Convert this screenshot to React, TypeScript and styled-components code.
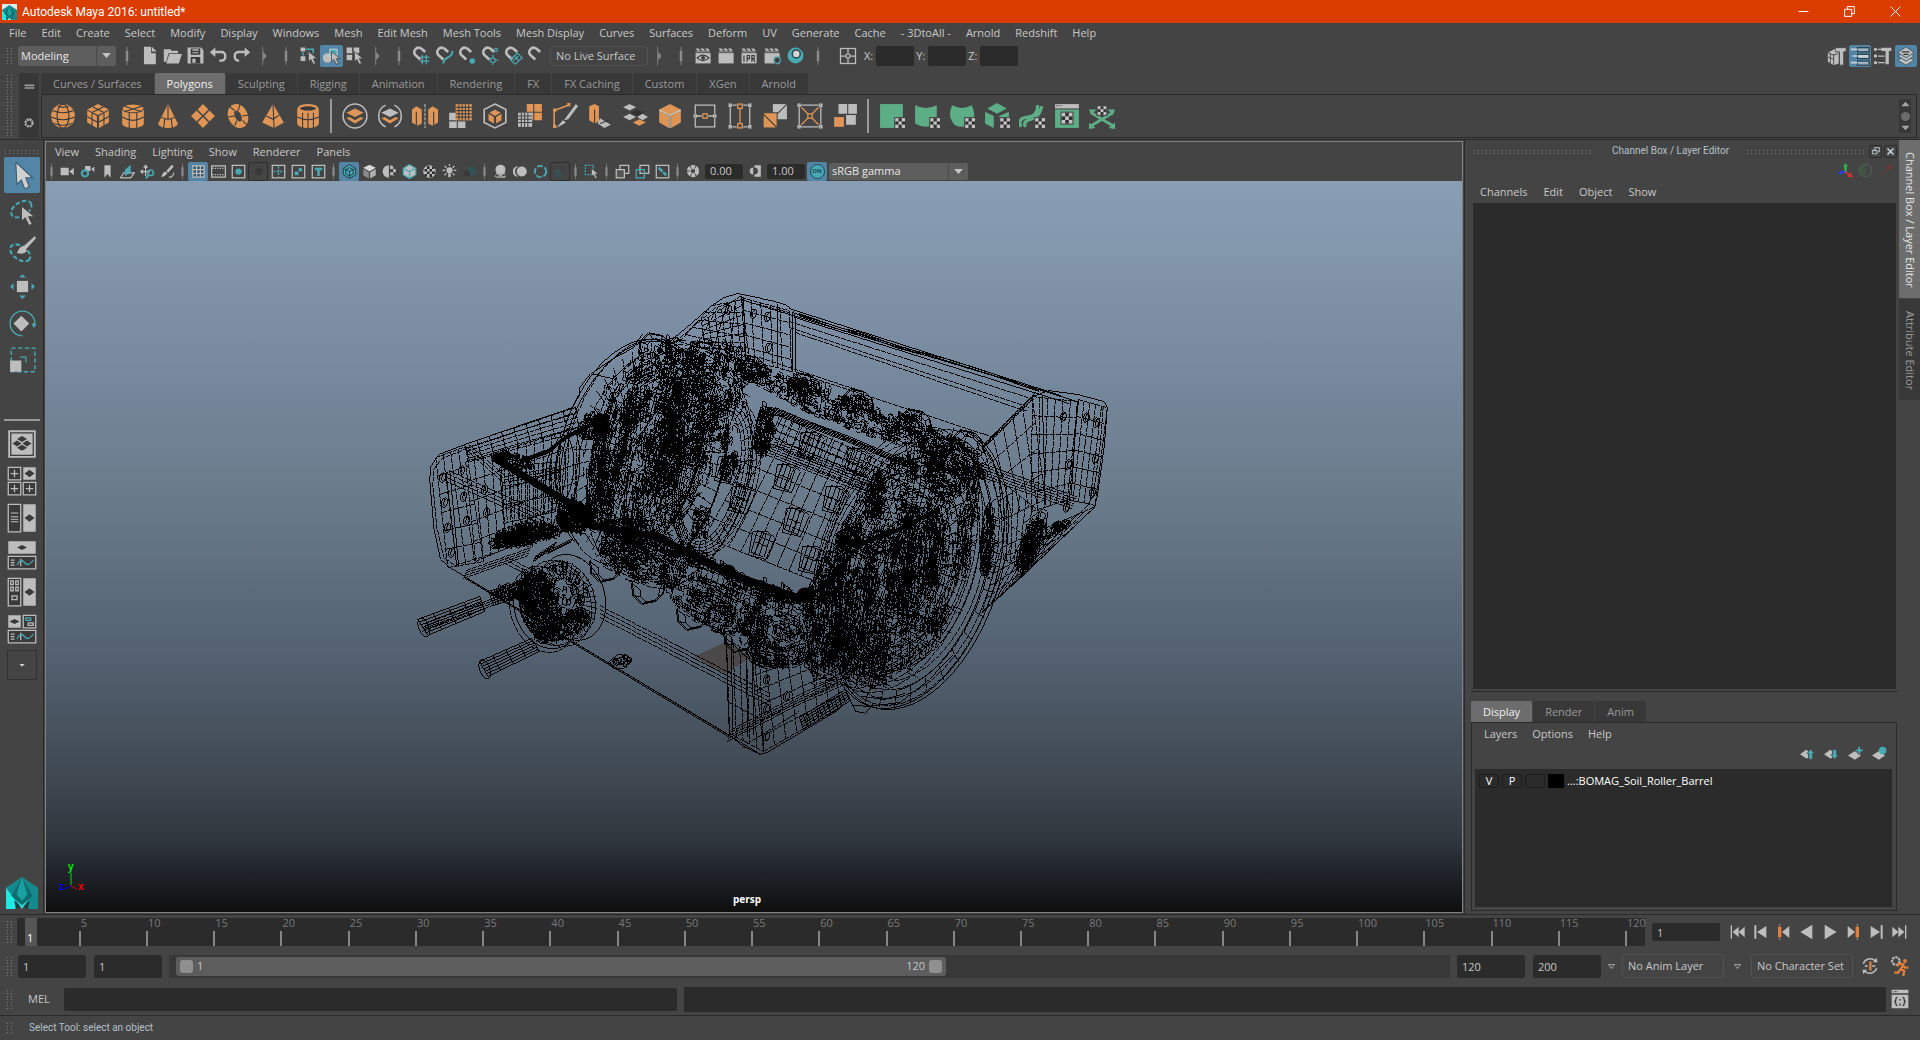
import React from "react";
import styled, { createGlobalStyle } from "styled-components";

/* ---------- palette ---------- */
const C = {
  bg: "#444444",
  dark: "#2b2b2b",
  line: "#2a2a2a",
  tab: "#383838",
  tabOn: "#6d6d6d",
  text: "#c8c8c8",
  dim: "#9a9a9a",
  blue: "#5285a6",
  icon: "#bdbdbd",
  teal: "#48aab5",
  orange: "#de9556",
  green: "#5dad87",
};

const Global = createGlobalStyle`
  * { box-sizing: border-box; }
  html, body { margin: 0; background: ${C.bg}; }
  body, button, input, select {
    font-family: "Open Sans", "Noto Sans", sans-serif;
    font-size: 11px;
    line-height: 16px;
    color: ${C.text};
  }
  button, input, select { margin: 0; padding: 0; border: 0; background: none; border-radius: 0; outline: none; }
  button { cursor: pointer; }
`;

/* ---------- deterministic random numbers for the mesh ---------- */
const makeRandom = (seed: number) => () => {
  seed = (seed * 1664525 + 1013904223) % 4294967296;
  return seed / 4294967296;
};

type P = [number, number];
const seg = (a: P, b: P) => `M${a[0].toFixed(1)} ${a[1].toFixed(1)}L${b[0].toFixed(1)} ${b[1].toFixed(1)}`;
const lerp = (a: P, b: P, t: number): P => [a[0] + (b[0] - a[0]) * t, a[1] + (b[1] - a[1]) * t];
const poly = (pts: P[], closed = false) =>
  "M" + pts.map((p) => `${p[0].toFixed(1)} ${p[1].toFixed(1)}`).join("L") + (closed ? "Z" : "");

/* bilinear grid over four corners */
const grid = (a: P, b: P, c: P, d: P, nu: number, nv: number) => {
  let s = "";
  for (let i = 0; i <= nu; i++) s += seg(lerp(a, b, i / nu), lerp(d, c, i / nu));
  for (let j = 0; j <= nv; j++) s += seg(lerp(a, d, j / nv), lerp(b, c, j / nv));
  return s;
};

const onEllipse = (cx: number, cy: number, rx: number, ry: number, rot: number, t: number): P => {
  const r = (rot * Math.PI) / 180;
  const x = Math.cos(t) * rx;
  const y = Math.sin(t) * ry;
  return [cx + x * Math.cos(r) - y * Math.sin(r), cy + x * Math.sin(r) + y * Math.cos(r)];
};
const ring = (cx: number, cy: number, rx: number, ry: number, rot: number, n = 36, from = 0, to = Math.PI * 2) => {
  const pts: P[] = [];
  for (let i = 0; i <= n; i++) pts.push(onEllipse(cx, cy, rx, ry, rot, from + ((to - from) * i) / n));
  return poly(pts);
};
const spokes = (cx: number, cy: number, r1: P, r2: P, rot: number, n: number, dx = 0, dy = 0) => {
  let s = "";
  for (let i = 0; i < n; i++) {
    const t = (i / n) * Math.PI * 2;
    const q = onEllipse(cx, cy, r2[0], r2[1], rot, t);
    s += seg(onEllipse(cx, cy, r1[0], r1[1], rot, t), [q[0] + dx, q[1] + dy]);
  }
  return s;
};
/* small parts inside an ellipse: arcs that follow it, upright facets, and short edges along the axle;
   parts gather in bands and leave openings between them */
const facets = (rnd: () => number, cx: number, cy: number, rx: number, ry: number, rot: number, n: number, len: number) => {
  let s = "";
  const wide = Math.min(rx, ry) > 20;
  for (let i = 0; i < n; i++) {
    const kk = Math.sqrt(rnd());
    const a = rnd() * Math.PI * 2;
    const kind = rnd();
    const skip = rnd();
    const l = len * (0.35 + rnd() * 0.65);
    const p = onEllipse(cx, cy, rx * kk, ry * kk, rot, a);
    const band = Math.sin(kk * 17) + Math.sin(a * 7 + kk * 5) + Math.sin(p[0] * 0.21) * 0.7;
    if (wide ? skip < (band < 0 ? 0.78 : 0.3) : skip < 0.22) continue;
    if (kind < 0.42) {
      const d = l / Math.max(6, Math.max(rx, ry) * kk);
      s += ring(cx, cy, rx * kk, ry * kk, rot, 3, a, a + Math.min(d, 1.2));
    } else if (kind < 0.7) {
      const q: P = [p[0] + l * 0.1, p[1] - l * 0.75];
      const w = 2 + rnd() * 3;
      s += poly([p, q, [q[0] + w, q[1] + w * 0.5], [p[0] + w, p[1] + w * 0.5]], rnd() < 0.5);
    } else if (kind < 0.9) {
      s += seg(p, [p[0] + l * 0.6, p[1] + l * 0.26]);
    } else {
      s += seg(p, [p[0] + l * 0.5, p[1] - l * 0.3]);
    }
  }
  return s;
};
/* parallel tubes along a polyline */
const tube = (pts: P[], w: number, n: number) => {
  let s = "";
  for (let i = 0; i <= n; i++) {
    const o = -w / 2 + (w * i) / n;
    s += poly(pts.map(([x, y]) => [x - o * 0.4, y + o] as P));
  }
  return s;
};
const tooth = (x: number, y: number, f: number) => {
  const top: P[] = [[-16, 10], [-15, -2], [-6, -11], [8, -8], [15, -1], [17, 12]];
  const a = top.map(([u, v]) => [x + u, y + v * f] as P);
  const b = top.map(([u, v]) => [x + u * 0.6 + 2, y + v * 0.6 * f + 2] as P);
  return poly(a) + poly(b) + a.map((p, i) => seg(p, b[i])).join("") + poly(a.map(([u, v]) => [u + 1, v + f] as P));
};
/* lug on the drum face */
const lug = (x: number, y: number) =>
  grid([x - 4, y - 14], [x + 9, y - 9], [x + 2, y + 13], [x - 11, y + 8], 3, 2) +
  poly([[x - 9, y - 13], [x + 6, y - 13], [x + 14, y - 6], [x + 5, y + 15], [x - 13, y + 11]], true);

const buildMesh = () => {
  const rnd = makeRandom(2016);
  let thin = "";
  let mid = "";

  /* far beam */
  ([
    [[744, 301], [1050, 393], 1], [[790, 309], [1062, 396], 1], [[796, 314], [1078, 402], 1],
    [[796, 318], [1070, 404], 1], [[790, 322], [1035, 400], 0], [[790, 328], [1030, 408], 0],
    [[796, 333], [1028, 412], 0], [[797, 373], [992, 437], 0], [[760, 358], [860, 391], 0],
  ] as [P, P, number][]).forEach(([a, b, m]) => (m ? (mid += seg(a, b)) : (thin += seg(a, b))));
  mid += poly([[800, 314], [840, 328], [862, 333], [900, 347], [950, 360], [988, 372], [1040, 391]]);
  mid += poly([[800, 316], [840, 330], [862, 335], [900, 349], [950, 362], [988, 374], [1040, 392]]);

  /* far plate */
  mid += poly([[670, 342], [693, 323], [712, 306], [724, 298], [738, 294], [772, 301], [786, 305], [794, 311], [796, 320], [796, 372]]);
  thin += poly([[676, 342], [716, 308], [740, 300], [790, 313]]);
  thin += grid([680, 342], [712, 306], [744, 300], [746, 362], 5, 4);
  thin += grid([702, 322], [742, 296], [750, 362], [706, 352], 6, 7);
  thin += grid([742, 298], [790, 311], [792, 372], [746, 360], 5, 5);
  mid += seg([744, 298], [746, 360]) + seg([778, 304], [778, 368]) + seg([793, 312], [793, 372]);

  /* left box */
  mid += poly([[573, 408], [520, 426], [465, 445], [439, 455], [431, 467], [430, 480], [434, 527], [441, 560], [450, 568], [465, 577]]);
  mid += seg([446, 470], [457, 567]) + seg([450, 470], [459, 568]);
  thin += poly([[576, 414], [520, 431], [467, 449], [442, 459], [434, 470], [433, 484], [437, 527], [444, 558], [455, 566], [503, 551]]);
  thin += grid([436, 458], [466, 447], [484, 562], [448, 568], 4, 6);
  thin += grid([465, 445], [576, 408], [580, 432], [470, 462], 9, 5);
  thin += grid([466, 462], [578, 428], [574, 520], [476, 562], 13, 5);
  thin += grid([500, 468], [560, 462], [556, 512], [504, 524], 14, 3);
  thin += tube([[447, 476], [545, 520]], 10, 3) + tube([[468, 448], [505, 480], [560, 470]], 6, 2);
  thin += tube([[465, 575], [530, 552]], 8, 3);
  mid += ring(562, 470, 12, 34, 4) + ring(568, 468, 12, 40, 4) + ring(556, 474, 10, 30, 4);

  /* right box */
  mid += poly([[1033, 397], [1050, 391], [1079, 395], [1105, 402], [1108, 408], [1105, 447], [1098, 497], [1095, 508], [1025, 575], [983, 613]]);
  mid += seg([1043, 396], [1046, 505]) + seg([1078, 402], [1072, 495]);
  thin += poly([[1104, 406], [1101, 445], [1094, 496], [1088, 506], [1020, 572]]);
  thin += grid([1033, 397], [1079, 402], [1070, 500], [1032, 512], 6, 6);
  thin += grid([1079, 400], [1108, 408], [1096, 506], [1068, 500], 5, 6);
  thin += grid([984, 447], [1033, 397], [1046, 500], [1004, 520], 5, 4);
  thin += tube([[984, 447], [1034, 397]], 7, 3) + tube([[960, 463], [1075, 503]], 12, 5);
  thin += grid([1002, 548], [1096, 507], [1025, 574], [983, 612], 9, 5);
  thin += grid([1000, 480], [1040, 512], [1026, 570], [1004, 560], 6, 2);

  /* base frame and front box */
  mid += seg([463, 576], [730, 736]) + seg([466, 578], [761, 755]) + seg([464, 578], [730, 738]);
  [0, 4, 8, 12].forEach((o) => (thin += seg([600, 606 + o], [770, 694 + o])));
  thin += tube([[505, 560], [540, 578]], 6, 2);
  mid += poly([[727, 636], [728, 690], [730, 736], [745, 748], [760, 755], [768, 753], [840, 710]]);
  mid += seg([732, 640], [733, 732]) + seg([747, 660], [748, 738]) + seg([753, 658], [754, 736]);
  thin += grid([727, 640], [760, 658], [764, 752], [730, 734], 5, 3);
  thin += grid([755, 660], [830, 636], [842, 708], [764, 752], 7, 6);
  thin += tube([[730, 736], [800, 700], [850, 678]], 12, 4) + seg([742, 748], [800, 712]);
  mid += grid([800, 718], [846, 690], [850, 702], [804, 730], 12, 5);
  mid += poly([[846, 690], [856, 712], [866, 714], [874, 704]]);

  /* barrel skin */
  thin += grid([776, 408], [905, 462], [862, 600], [705, 538], 13, 7);
  thin += grid([780, 416], [890, 466], [880, 490], [770, 444], 16, 4);
  thin += tube([[772, 448], [880, 490]], 16, 7);
  [[811, 446], [858, 462], [787, 478], [742, 500], [796, 522], [762, 545], [728, 470], [836, 500], [812, 560]].forEach(([x, y]) => (mid += lug(x, y)));
  mid += tube([[770, 410], [850, 440], [920, 470]], 5, 4);

  /* teeth over the rim */
  [[655, 344], [703, 352], [750, 366], [804, 384], [857, 400], [915, 420], [967, 441]].forEach(([x, y]) => (mid += tooth(x, y, 1)));
  [[606, 572], [648, 594], [693, 620], [740, 642]].forEach(([x, y]) => (mid += tooth(x, y, -1)));
  mid += facets(rnd, 800, 388, 14, 9, 14, 150, 8) + facets(rnd, 752, 371, 16, 12, 20, 170, 8);
  mid += facets(rnd, 856, 405, 14, 9, 14, 110, 8) + facets(rnd, 908, 425, 16, 10, 14, 120, 8);
  thin += facets(rnd, 836, 410, 96, 14, 22, 700, 11) + facets(rnd, 950, 456, 40, 18, 30, 460, 10);

  /* left drum end */
  for (let i = 0; i < 10; i++) thin += ring(634 + i * 6, 452 + i * 3, 66 - (i % 4) * 7, 116 - (i % 4) * 10, 16);
  mid += ring(628, 448, 66, 112, 18, 30, 1.9, 5) + ring(632, 450, 66, 112, 18, 30, 1.9, 5);
  mid += poly([[573, 408], [580, 395], [580, 388], [591, 374], [617, 380]]) + poly([[592, 374], [612, 360], [634, 348], [643, 334]]);
  thin += spokes(640, 452, [20, 34], [64, 112], 16, 44) + spokes(660, 460, [30, 54], [52, 90], 16, 40, 14, 6);
  thin += facets(rnd, 652, 446, 66, 104, 16, 2000, 18) + facets(rnd, 704, 404, 40, 64, 12, 1100, 13);
  mid += facets(rnd, 640, 450, 44, 92, 14, 480, 22) + facets(rnd, 663, 455, 19, 44, 14, 420, 12);
  mid += facets(rnd, 686, 366, 38, 26, 24, 380, 10) + facets(rnd, 596, 470, 9, 56, 6, 170, 20);
  mid += facets(rnd, 618, 450, 7, 70, 16, 120, 26) + facets(rnd, 672, 420, 6, 64, 10, 110, 26);
  mid += facets(rnd, 763, 432, 9, 26, 8, 260, 12) + facets(rnd, 728, 468, 8, 14, 20, 130, 8) + facets(rnd, 700, 525, 9, 18, 8, 130, 9);
  for (let i = 0; i < 6; i++) thin += ring(712 + i, 478, 26 + i * 3, 66 + i * 3, 14);
  thin += spokes(712, 478, [26, 66], [42, 82], 14, 36);

  /* right drum end */
  [0, 4, 9, 14, 20, 27, 34, 42, 50].forEach((o) => {
    thin += ring(917 - o * 0.2, 568, 80 - o * 0.9, 143 - o * 1.8, 18);
    thin += ring(898 - o * 0.3, 560, 78 - o * 0.8, 138 - o * 1.8, 18);
  });
  mid += ring(919, 569, 82, 146, 18, 48, -1.5, 2.0) + ring(915, 568, 82, 146, 18, 48, -1.5, 2.0);
  mid += ring(908, 565, 78, 132, 17, 48, -1.7, 1.2);
  thin += spokes(917, 568, [70, 128], [82, 146], 18, 34) + spokes(905, 562, [24, 44], [66, 120], 18, 46);
  thin += facets(rnd, 898, 570, 66, 124, 17, 2700, 20) + facets(rnd, 838, 612, 34, 80, 12, 1300, 16);
  mid += facets(rnd, 914, 560, 28, 58, 14, 900, 16) + facets(rnd, 892, 600, 30, 76, 16, 420, 24);
  mid += facets(rnd, 938, 474, 34, 22, 24, 420, 12) + facets(rnd, 874, 500, 8, 26, 10, 130, 14);
  mid += facets(rnd, 986, 545, 6, 34, 4, 150, 18) + facets(rnd, 832, 645, 9, 26, 18, 180, 13);
  mid += facets(rnd, 972, 500, 6, 34, 6, 90, 18) + facets(rnd, 830, 590, 10, 24, 8, 170, 14);
  mid += facets(rnd, 846, 540, 11, 12, 10, 150, 8) + facets(rnd, 864, 660, 26, 34, 20, 340, 14);
  thin += facets(rnd, 780, 632, 42, 38, 20, 1200, 12) + facets(rnd, 712, 606, 50, 24, 26, 900, 11) + facets(rnd, 640, 562, 50, 22, 20, 960, 11);
  mid += facets(rnd, 764, 656, 24, 12, 20, 150, 10) + facets(rnd, 626, 555, 24, 14, 10, 160, 10);
  thin += grid([706, 560], [770, 586], [762, 640], [690, 610], 12, 6);
  mid += poly([[853, 706], [870, 707], [901, 703], [930, 680], [953, 656]]) + poly([[862, 697], [885, 700], [906, 694]]);
  mid += facets(rnd, 1030, 545, 9, 30, 22, 340, 11) + facets(rnd, 1056, 530, 14, 5, -40, 90, 6);
  mid += poly([[1024, 524], [1044, 509], [1048, 512], [1047, 536], [1022, 574]]);

  /* hub and rods */
  for (let i = 0; i < 5; i++) thin += ring(572 - i * 7, 598 + i * 3, 33 - (i % 2) * 3, 44 - (i % 2) * 4, -18);
  mid += ring(572, 598, 33, 44, -18, 30, -1.7, 1.6) + ring(548, 608, 33, 42, -18, 30, 1.3, 4.4);
  thin += spokes(566, 600, [14, 20], [30, 40], -18, 40);
  mid += facets(rnd, 538, 606, 19, 35, -14, 640, 12) + facets(rnd, 562, 628, 30, 11, -24, 380, 9) + facets(rnd, 562, 594, 22, 30, -14, 260, 10);
  mid += grid([418, 620], [480, 597], [485, 612], [428, 636], 4, 6) + ring(424, 628, 5, 10, -20);
  thin += tube([[424, 628], [500, 600]], 8, 3);
  mid += grid([489, 592], [527, 580], [530, 594], [494, 606], 14, 6) + facets(rnd, 512, 592, 18, 9, -14, 120, 8);
  mid += grid([480, 662], [532, 639], [540, 652], [488, 677], 4, 6) + ring(485, 670, 5, 10, -20);
  mid += facets(rnd, 621, 662, 8, 5, 0, 70, 6) + poly([[610, 662], [618, 655], [628, 656], [632, 662], [624, 669], [613, 669]], true);

  /* hydraulic lines */
  mid += tube([[556, 545], [534, 560]], 5, 3) + tube([[572, 541], [548, 553]], 3, 2);
  thin += facets(rnd, 528, 536, 42, 9, -14, 480, 12);
  mid += facets(rnd, 518, 536, 30, 6, -14, 240, 12) + facets(rnd, 574, 518, 18, 16, 10, 420, 12);
  mid += facets(rnd, 592, 428, 16, 12, -20, 200, 9) + facets(rnd, 512, 462, 20, 7, 16, 170, 8);
  mid += facets(rnd, 620, 530, 40, 10, 12, 260, 10) + facets(rnd, 690, 558, 40, 8, 22, 260, 10) + facets(rnd, 762, 590, 42, 8, 16, 240, 10);

  const holes: P[] = [
    [443, 478], [462, 471], [445, 503], [464, 497], [448, 528], [467, 521], [487, 513], [485, 490], [452, 553],
    [729, 310], [754, 314], [768, 317], [740, 351], [769, 348], [1064, 417], [1087, 418], [1097, 423], [1096, 459],
    [1069, 465], [1093, 493], [1067, 508], [767, 680], [767, 710], [767, 737], [787, 697],
  ];
  holes.forEach(([x, y]) => (mid += ring(x, y, 3, 5, 14, 10) + ring(x + 1, y, 2, 4, 14, 8)));

  const heavy =
    tube([[494, 458], [530, 480], [577, 508], [592, 526], [660, 538], [700, 560], [727, 573], [780, 592], [803, 600]], 5, 4) +
    tube([[520, 462], [548, 452], [566, 438], [590, 426]], 3, 2) +
    tube([[803, 600], [830, 584], [860, 545], [900, 530], [935, 512]], 3, 2);
  return { thin, mid, heavy };
};
const MESH = buildMesh();

const Scene = () => (
  <SceneSvg viewBox="46 182 1417 730" preserveAspectRatio="xMidYMid meet" aria-hidden="true">
    <g fill="#4a4848">
      <path d="M695 657L727 642L752 658L724 675Z" />
    </g>
    <g fill="none" stroke="#000" shapeRendering="crispEdges">
      <path d={MESH.thin} strokeWidth="1" strokeDasharray="5 1" />
      <path d={MESH.mid} strokeWidth="1" />
      <path d={MESH.heavy} strokeWidth="2" />
    </g>
    <g fill="#000">
      <ellipse cx="500" cy="458" rx="8" ry="5" />
      <ellipse cx="600" cy="423" rx="9" ry="8" />
      <ellipse cx="806" cy="596" rx="9" ry="8" />
      <ellipse cx="728" cy="571" rx="8" ry="6" />
      <ellipse cx="580" cy="516" rx="10" ry="8" />
    </g>
  </SceneSvg>
);

/* ---------- icons, all on a 24 unit canvas ---------- */
const g = C.icon;
const t = C.teal;
const o = C.orange;
const gr = C.green;
const k = "#3a3a3a";

const Checker = ({ x, y, s = 9 }: { x: number; y: number; s?: number }) => {
  const u = s / 3;
  return (
    <g>
      <rect x={x - 1} y={y - 1} width={s + 2} height={s + 2} fill={C.bg} />
      <rect x={x} y={y} width={s} height={s} fill="#c4c4c4" />
      {[[1, 0], [0, 1], [2, 1], [1, 2]].map(([a, b]) => (
        <rect key={`${a}${b}`} x={x + a * u} y={y + b * u} width={u} height={u} fill="#333" />
      ))}
    </g>
  );
};
const Arrow = ({ x, y, s = 1 }: { x: number; y: number; s?: number }) => (
  <path transform={`translate(${x} ${y}) scale(${s})`} d="M0 0V13L3 10L6 16L9 15L6 9H11Z" fill={g} stroke={C.bg} strokeWidth="1" />
);
const Magnet = () => (
  <path d="M9 17L4 10A5.5 5.5 0 0 1 14 5L17 9" fill="none" stroke={g} strokeWidth="3.4" transform="rotate(-12 10 10)" />
);
const Clap = ({ children }: { children?: React.ReactNode }) => (
  <g>
    <path d="M2 3h4l2 3H4zM8 3h4l2 3h-4zM14 3h4l2 3h-4zM2 7h18v1H2z" fill={g} />
    <rect x="2" y="9" width="19" height="13" fill={g} />
    {children}
  </g>
);
const Diamond = ({ x, y, w = 5, h = 3, c = k }: { x: number; y: number; w?: number; h?: number; c?: string }) => (
  <path d={`M${x - w} ${y}L${x} ${y - h}L${x + w} ${y}L${x} ${y + h}Z`} fill={c} />
);
const cube = (top: string, l: string, r: string) => (
  <g>
    <path d="M12 1L22 6L12 11L2 6Z" fill={top} />
    <path d="M2 7L11 12V23L2 18Z" fill={l} />
    <path d="M22 7L13 12V23L22 18Z" fill={r} />
  </g>
);

const ICONS: Record<string, React.ReactNode> = {
  sep: <g fill="#8c8c8c"><rect x="11.5" y="1" width="1" height="22" /><rect x="10.5" y="6" width="3" height="12" /></g>,
  collapse: <g fill="#8c8c8c"><rect x="10" y="1" width="1" height="22" /><path d="M11 7L15 12L11 17Z" /></g>,
  down: <path d="M5 8h14l-7 8z" fill="#c4c4c4" />,
  file: <path d="M5 1h9v8h6v14H5zM15 1l6 6h-6z" fill={g} />,
  open: <path d="M1 4h8l2 2h8v3H7L4 20H1zM8 10h16l-4 12H4z" fill={g} />,
  save: <g><path d="M2 2h17l3 3v17H2z" fill={g} /><path d="M6 3h12v8H6zM6 14h12v8H6z" fill={k} /><path d="M8 4h8v2H8zM8 8h8v1H8zM8 16h4v5H8z" fill={g} /></g>,
  undo: <path d="M1 8L8 2V6H16a6 6 0 0 1 6 6v2a6 6 0 0 1-6 6h-3v-3h3a3 3 0 0 0 3-3v-2a3 3 0 0 0-3-3H8v5z" fill={g} />,
  redo: <path d="M23 8L16 2V6H8a6 6 0 0 0-6 6v2a6 6 0 0 0 6 6h1v-3H8a3 3 0 0 1-3-3v-2a3 3 0 0 1 3-3h8v5z" fill={g} />,
  selHier: <g><path d="M2 2h6v5H2zM2 13h6v6H2z" fill={g} /><path d="M5 8v4M9 4h9v5M12 7v4" stroke={t} strokeWidth="2" fill="none" /><Arrow x={12} y={7} /></g>,
  selObj: <g><circle cx="7" cy="15" r="6" fill={g} /><rect x="10" y="4" width="9" height="9" fill={t} stroke="#e0e0e0" /><Arrow x={12} y={7} /></g>,
  selComp: <g><path d="M2 2h7v7H2zM11 2h7v7h-7zM2 11h7v7H2z" fill={g} /><Arrow x={12} y={7} /></g>,
  snapGrid: <g><Magnet /><path d="M10 14h12M10 19h12M13 11v12M18 11v12" stroke={t} strokeWidth="1.6" /></g>,
  snapCurve: <g><Magnet /><path d="M10 22Q12 16 17 14T22 6" stroke={t} strokeWidth="2.4" fill="none" /></g>,
  snapPoint: <g><Magnet /><circle cx="18" cy="19" r="3.5" fill={t} /></g>,
  snapProj: <g><Magnet /><circle cx="19" cy="5" r="2" stroke={t} fill="none" strokeWidth="1.5" /><circle cx="15" cy="18" r="3" stroke={t} fill="none" strokeWidth="1.5" /><path d="M15 11v3M15 22v2M19 18h3M9 18h2" stroke={t} strokeWidth="1.5" /></g>,
  snapPlane: <g><Magnet /><path d="M8 17L17 9L23 15L14 23ZM12 18l6-5M14 13l5 6" stroke={t} strokeWidth="1.5" fill="none" /></g>,
  snapLive: <Magnet />,
  clapEye: <Clap><path d="M4 15Q11 8 19 15Q11 22 4 15Z" fill={g} stroke={k} strokeWidth="1.5" /><circle cx="11.5" cy="15" r="2.5" fill={k} /></Clap>,
  clap: <Clap />,
  clapIpr: <Clap><path d="M5 12v8M9 20v-8h3v4H9M15 20v-8h3v4h-2l3 4" stroke={k} strokeWidth="1.5" fill="none" /></Clap>,
  clapGear: <Clap><circle cx="18" cy="18" r="4" stroke={t} fill={k} strokeWidth="2.5" strokeDasharray="2 1" /></Clap>,
  render: <g><circle cx="12" cy="12" r="10" fill={t} /><circle cx="13" cy="10" r="6" fill="#2f4a50" /><circle cx="13" cy="10" r="4" fill="#d6d6d6" /></g>,
  layoutPan: <g fill="none" stroke={g} strokeWidth="1.5"><rect x="3" y="3" width="18" height="18" /><path d="M12 3v6M12 15v6M3 12h6M15 12h6" /><circle cx="12" cy="12" r="2.5" /></g>,
  uiModel: <g><path d="M1 8L10 3L14 6V21L8 23L1 19Z" fill={g} /><path d="M1 13l7 3M4 9v12M8 10v13M1 8l7 3 5-2" stroke={k} fill="none" /><path d="M10 2h13v5h-3v16h-5V7h-5z" fill={g} stroke={C.bg} /></g>,
  uiAttr: <g stroke="#27404f" fill="none" strokeWidth="1.5"><rect x="9" y="2" width="14" height="5" fill="#9fb3c0" /><rect x="9" y="10" width="14" height="5" fill="#c9d3da" /><rect x="9" y="18" width="14" height="5" fill="#9fb3c0" /><path d="M1 4h8M3 12h6M1 20h8" stroke="#c9d3da" strokeWidth="2" /></g>,
  uiTool: <g><circle cx="3" cy="4" r="2" fill={g} /><circle cx="3" cy="12" r="2" fill={g} /><circle cx="3" cy="20" r="2" fill={g} /><path d="M6 4h5M6 12h8M6 20h8" stroke={g} strokeWidth="1.5" /><path d="M10 2h12v4h-3v16h-4V6h-5z" fill={g} /></g>,
  uiLayers: <g stroke="#33536a" strokeWidth="1" fill={g}><path d="M2 17L12 11L22 17L12 23Z" /><path d="M2 12L12 6L22 12L12 18Z" /><path d="M2 8L12 1L22 8L12 14Z" /><path d="M7 7h9M9 10h6" stroke={k} strokeWidth="1.5" /></g>,
  gear: <circle cx="12" cy="12" r="6" fill="none" stroke="#b4b4b4" strokeWidth="4" strokeDasharray="3.4 1.3" />,
  burger: <path d="M3 8h18M3 13h18" stroke="#9a9a9a" strokeWidth="3" />,

  /* polygon shelf */
  sphere: <g><circle cx="12" cy="12" r="11" fill={o} /><g stroke={k} fill="none"><ellipse cx="12" cy="12" rx="5.5" ry="11" /><path d="M2 7Q12 11 22 7M1 13Q12 18 23 13M4 19Q12 22 20 19M7 3q5 2 10 0" /></g></g>,
  cube: <g>{cube(o, o, o)}<path d="M7 3.5L17 8.5M17 3.5L7 8.5M2 12.5L11 17.5M22 12.5L13 17.5M6.5 9.5V21M17.5 9.5V21" stroke={k} /></g>,
  cylinder: <g><path d="M2 5v14a10 4 0 0 0 20 0V5z" fill={o} /><ellipse cx="12" cy="5" rx="10" ry="4" fill={o} stroke={k} strokeWidth=".8" /><path d="M4 3l16 5M20 3L4 8M2 13q10 6 20 0M8.5 9v14M15.5 9v14" stroke={k} fill="none" /></g>,
  cone: <g><path d="M12 1L21 19a9 4 0 0 1-18 0z" fill={o} /><path d="M6 13q6 4 12 0M12 2v13M9 15l-1 8M15 15l1 8" stroke={k} fill="none" /></g>,
  plane: <g fill={o}><path d="M12 1l5 5-5 5-5-5zM6 7l5 5-5 5-5-5zM18 7l5 5-5 5-5-5zM12 13l5 5-5 5-5-5z" /></g>,
  torus: <g><ellipse cx="12" cy="12" rx="6" ry="8.5" transform="rotate(-25 12 12)" fill="none" stroke={o} strokeWidth="6" /><path d="M4 3l5 4M3 13l6-1M9 21l2-5M20 20l-4-4M22 11l-6 1M14 1l-2 6" stroke={k} /></g>,
  pyramid: <g><path d="M12 1L22 18L13 23L2 18Z" fill={o} /><path d="M12 1L13 23M6 12l6 3 6-4" stroke={k} fill="none" /></g>,
  pipe: <g><path d="M2 5v14a10 4 0 0 0 20 0V5z" fill={o} /><ellipse cx="12" cy="5" rx="8.5" ry="3" fill={k} stroke={o} strokeWidth="2" /><path d="M2 13q10 5 20 0M7 9v14M12 9v14M17 9v14" stroke={k} fill="none" /></g>,
  combine: <g><circle cx="12" cy="12" r="11" stroke={g} fill="none" strokeWidth="1.4" /><Diamond x={12} y={9} w={8} h={4} c={o} /><path d="M4 14l3-1 5 3 5-3 3 1-8 5z" fill={o} /></g>,
  separate: <g><path d="M8 2A11 11 0 0 0 8 22M16 2A11 11 0 0 1 16 22" stroke={g} fill="none" strokeWidth="1.4" /><Diamond x={12} y={9} w={8} h={4} c={g} /><path d="M4 14l3-1 5 3 5-3 3 1-8 5z" fill={o} /></g>,
  mirror: <g><path d="M0 6l4-3 5 3v13l-4 2-5-3zM15 6l4-3 5 3v12l-5 3-4-2z" fill={o} /><path d="M4 8v13M20 8v13" stroke={k} /><path d="M12 1v22" stroke={g} strokeDasharray="3 1" /></g>,
  smooth: <g><path d="M2 9h7v7H2zM2 17h7v6H2zM10 17h7v6h-7z" fill={g} /><rect x="8" y="1" width="15" height="15" fill={o} /><path d="M11 1v15M14 1v15M17 1v15M20 1v15M8 4h15M8 7h15M8 10h15M8 13h15" stroke={C.bg} /></g>,
  cage: <g><path d="M12 1L22 6V18L12 23L2 18V6Z" fill="none" stroke={g} strokeWidth="1.5" /><path d="M12 6l5 3-5 3-5-3zM6 10l5 3v6l-5-3zM18 10l-5 3v6l5-3z" fill={o} /></g>,
  reduce: <g><path d="M9 1h6v7H9zM16 1h7v7h-7zM9 9h6v7H9zM16 9h7v7h-7z" fill={o} /><rect x="1" y="9" width="13" height="13" fill={g} /><path d="M4 9v13M7 9v13M10 9v13M1 12h13M1 15h13M1 18h13" stroke={C.bg} /></g>,
  cutTool: <g><path d="M2 22V7L15 2" stroke={o} fill="none" strokeWidth="1.5" /><path d="M1 5h3v3H1zM14 0h3v3h-3zM1 20h3v3H1z" fill={o} /><path d="M22 1l2 2-9 12-4 1zM10 16l3 2-9 5z" fill={g} /></g>,
  extrude: <g><path d="M2 3l5-2 4 2v14l-4 2-5-3z" fill={o} /><path d="M7 6v13" stroke={k} /><path d="M12 14l5 3 5 3-6 3-6-4z" fill={g} /><path d="M12 19l8-3" stroke={k} /></g>,
  bridge: <g><Diamond x={7} y={4} w={6} h={3} c={g} /><Diamond x={14} y={9} w={6} h={3} c="#333" /><Diamond x={7} y={13} w={6} h={3} c={g} /><Diamond x={16} y={18} w={6} h={3} c={o} /><Diamond x={19} y={13} w={5} h={3} c={g} /></g>,
  bevel: <g>{cube(o, o, o)}<path d="M2 6.5L12 11.5L22 6.5M12 11.5V23" stroke="#e4e4e4" fill="none" /></g>,
  edge: <g fill="none" stroke={g} strokeWidth="1.2"><path d="M3 10V2h18v8M3 14v8h18v-8" /><path d="M4 12h5M15 12h5" /><rect x="10" y="10" width="4" height="4" stroke={o} /><path d="M2 11h2v2H2zM20 11h2v2h-2z" /></g>,
  vert: <g fill="none" stroke={g} strokeWidth="1.2"><path d="M3 4v16M21 4v16M5 2h4M15 2h4M5 22h4M15 22h4" /><path d="M2 1h2v2H2zM20 1h2v2h-2zM2 21h2v2H2zM20 21h2v2h-2z" /><path d="M12 5v14" stroke={o} /><rect x="10" y="1" width="4" height="4" stroke={o} /><rect x="10" y="19" width="4" height="4" stroke={o} /></g>,
  quad: <g><path d="M10 1h13v14H10z" fill={g} /><path d="M1 9h13v14H1z" fill={o} stroke={C.bg} /><path d="M1 10l13 13M14 10l9-9" stroke={k} /></g>,
  target: <g fill="none" strokeWidth="1.2"><path d="M4 2h16M4 22h16M2 4v16M22 4v16" stroke={g} /><path d="M4 4l16 16M20 4L4 20" stroke={o} /><rect x="10" y="10" width="4" height="4" fill={C.bg} stroke={o} /><path d="M1 1h2v2H1zM21 1h2v2h-2zM1 21h2v2H1zM21 21h2v2h-2z" stroke={g} /></g>,
  blocks: <g><path d="M6 1h8v9H6zM15 1h8v9h-8zM13 11h9v9h-9z" fill={g} /><rect x="2" y="13" width="9" height="9" fill={o} /></g>,
  uvPlane: <g><rect x="1" y="1" width="21" height="22" fill={gr} /><Checker x={15} y={14} /></g>,
  uvCyl: <g><path d="M1 2q10 5 20 0v17q-10 6-20 0z" fill={gr} /><Checker x={15} y={14} /></g>,
  uvSph: <g><path d="M3 2q9 5 18 0q5 10-1 18q-8 4-15 0Q-2 12 3 2z" fill={gr} /><Checker x={15} y={14} /></g>,
  uvAuto: <g><path d="M12 0l9 5-9 5-9-5zM1 8l8 4v11l-8-4zM14 12l9-4v6h-9z" fill={gr} /><Checker x={15} y={14} /></g>,
  uvCont: <g><path d="M2 22Q-2 14 8 13T17 2M6 22Q3 17 11 15T21 3" stroke={gr} strokeWidth="3" fill="none" /><Checker x={15} y={14} /></g>,
  uvEdit: <g><rect x="1" y="1" width="22" height="4" fill={g} /><rect x="1" y="6" width="22" height="17" fill={gr} /><path d="M2 2h1v1H2zM4 2h1v1H4zM6 2h1v1H6z" fill={k} /><Checker x={7} y={9} s={10} /></g>,
  uvSnap: <g><path d="M2 9L22 21M22 9L2 21" stroke={gr} strokeWidth="2.5" /><path d="M0 6h7l-5 5zM24 6h-7l5 5zM0 24v-6l6 5zM24 24v-6l-6 5z" fill={gr} /><Checker x={8} y={3} s={8} /></g>,
  spinUp: <path d="M3 16h18L12 6z" fill="#a5a5a5" />,
  spinDot: <circle cx="12" cy="12" r="10" fill="#6a6a6a" />,
  spinDown: <path d="M3 8h18l-9 10z" fill="#a5a5a5" />,

  /* panel toolbar */
  cam: <path d="M1 6h13v12H1zM15 12l7-6v12z" fill={g} />,
  camGear: <g><path d="M8 3h9v8H8zM18 8l5-4v9z" fill={g} /><circle cx="8" cy="15" r="5" fill="none" stroke={t} strokeWidth="3.5" /></g>,
  mark: <path d="M7 2h10v20l-5-6-5 6z" fill={g} />,
  imgPlane: <g><path d="M1 22L6 14H23L17 22Z" fill="none" stroke={g} strokeWidth="2" /><path d="M8 19V9l9-8v13z" fill={t} /></g>,
  pan2d: <g><path d="M9 3v16M2 12h14M6 6l3-4 3 4M5 9l-4 3 4 3" stroke={g} strokeWidth="2" fill="none" /><circle cx="17" cy="14" r="4.5" fill="none" stroke={t} strokeWidth="2.5" /><path d="M14 18l-5 5" stroke={t} strokeWidth="3" /></g>,
  pencil: <g><path d="M19 1l3 3-9 10-3-3zM9 12l3 3q-4 5-10 6q2-8 7-9z" fill={g} /><path d="M14 21q7 1 8-7" stroke={g} strokeWidth="2" fill="none" /></g>,
  gridP: <path d="M3 3h18v18H3zM3 9h18M3 15h18M9 3v18M15 3v18" stroke={g} strokeWidth="2" fill="#33536a" />,
  film: <g><path d="M1 3h22v18H1z" fill="none" stroke={g} strokeWidth="2" /><path d="M2 7h20M2 17h20" stroke={g} strokeWidth="2" strokeDasharray="2 2" /></g>,
  gate: <g><path d="M2 2h20v20H2z" fill="none" stroke={g} strokeWidth="2" /><circle cx="12" cy="12" r="5" fill={t} /></g>,
  gateOff: <circle cx="12" cy="12" r="6" fill="#3a3a3a" />,
  cross: <g><path d="M2 2h20v20H2z" fill="none" stroke={g} strokeWidth="2" /><path d="M12 4v16M4 12h16" stroke={t} strokeWidth="2.5" strokeDasharray="3 2" /></g>,
  safeA: <g><path d="M2 2h20v20H2z" fill="none" stroke={g} strokeWidth="2" /><circle cx="15" cy="9" r="3" fill={t} /><path d="M6 12h6v6H6z" fill={t} /></g>,
  safeT: <g><path d="M2 2h20v20H2z" fill="none" stroke={g} strokeWidth="2" /><path d="M6 6h12v4h-4v9h-4v-9H6z" fill={t} /></g>,
  wire: <g stroke="#1e3a48" strokeWidth="1.5" fill={t}><path d="M12 1L22 7V17L12 23L2 17V7Z" /><path d="M12 6l6 3v7l-6 3-6-3V9zM12 12l6-3M12 12L6 9M12 12v10M2 7l4 2M22 7l-4 2" fill="none" /></g>,
  shaded: <g><path d="M12 1l10 5-10 6L2 6z" fill="#d8d8d8" /><path d="M2 8l9 5v10l-9-5z" fill="#8a8a8a" /><path d="M22 8l-9 5v10l9-5z" fill="#b0b0b0" /></g>,
  half: <g><path d="M11 2a10 10 0 0 0 0 20z" fill={g} /><path d="M13 2a10 10 0 0 1 5 2v4h-5zM18 8h4v5h-4zM13 13h5v5h-5zM18 18h2l-2 2z" fill={g} /></g>,
  wireShade: <g stroke={t} strokeWidth="1.8" fill={g}><path d="M12 1L22 7V17L12 23L2 17V7Z" /><path d="M2 7l10 5 10-5M12 12v11" fill="none" /></g>,
  tex: <g><circle cx="12" cy="12" r="10" fill={g} /><path d="M8 3h4v5H8zM16 4h4v4h-4zM4 8h4v4H4zM12 8h4v4h-4zM8 12h4v4H8zM16 12h5v4h-5zM4 16h4v4H4zM12 16h4v5h-4z" fill="#2d2d2d" /></g>,
  light: <g><circle cx="12" cy="10" r="5" fill={g} /><rect x="10" y="15" width="4" height="6" fill={g} /><path d="M12 0v3M1 10h4M19 10h4M4 3l3 3M20 3l-3 3M4 18l3-3M20 18l-3-3" stroke={g} strokeWidth="2" /></g>,
  shadow: <g><circle cx="15" cy="11" r="7" fill="#2f5558" /><circle cx="8" cy="15" r="5" fill="#3a3a3a" /></g>,
  ao: <g><circle cx="12" cy="9" r="8" fill={g} /><path d="M3 19q9 5 18 0M5 15l14 7M19 15L5 22" stroke={g} strokeWidth="2" fill="none" strokeDasharray="2 1" /></g>,
  blur: <g><circle cx="14" cy="12" r="8" fill={g} /><path d="M7 4a9 9 0 0 0 0 16M3 6a9 9 0 0 0 0 12" stroke={g} strokeWidth="2" fill="none" /></g>,
  aa: <circle cx="12" cy="12" r="9" fill="none" stroke={t} strokeWidth="3" strokeDasharray="9 3" />,
  dofOff: <g><rect x="4" y="8" width="9" height="14" fill="#355154" /><path d="M12 3h8v9h-8z" fill="#414141" /></g>,
  marquee: <g><path d="M2 2h13v15H2z" fill="none" stroke={t} strokeWidth="2" strokeDasharray="3 2" /><Arrow x={12} y={7} /></g>,
  iso: <g fill="none" stroke={g} strokeWidth="2"><path d="M8 2h14v13H8z" /><path d="M2 9h13v13H2z" fill="#555" /></g>,
  isoT: <g fill="none" strokeWidth="2"><path d="M8 2h14v13H8z" stroke={g} /><path d="M2 9h13v13H2z" stroke={t} /></g>,
  isoD: <g><path d="M2 2h20v20H2z" fill="none" stroke={g} strokeWidth="2" /><path d="M6 6l6 6M13 13l5 5" stroke={t} strokeWidth="4" /></g>,
  aperture: <circle cx="12" cy="12" r="7" fill="none" stroke={g} strokeWidth="7" strokeDasharray="6 1.3" />,
  contrast: <g><path d="M9 6a6 6 0 0 0 0 12z" fill={g} /><path d="M11 2h11v20H11v-4a6 6 0 0 0 0-12z" fill={g} /></g>,

  /* toolbox */
  tSelect: <path d="M6 0L21 14H15L18 22L14 24L11 16L7 20Z" fill="#cfcfcf" stroke="#3b5d75" />,
  tLasso: <g><ellipse cx="11" cy="9" rx="10" ry="6" fill="none" stroke={t} strokeWidth="1.8" strokeDasharray="4 2" transform="rotate(-32 11 9)" /><Arrow x={11} y={6} s={1.1} /></g>,
  tPaint: <g><ellipse cx="10" cy="15" rx="10" ry="6" fill="none" stroke={t} strokeWidth="1.8" strokeDasharray="4 2" transform="rotate(35 10 15)" /><path d="M23 0l1 2-9 10-3-2zM12 9l4 4q-3 4-9 2q2-5 5-6z" fill={g} /></g>,
  tMove: <g><rect x="7" y="7" width="10" height="10" fill={g} /><path d="M9 4l3-3 3 3zM9 20l3 3 3-3zM4 9l-3 3 3 3zM20 9l3 3-3 3z" fill={t} /></g>,
  tRotate: <g><path d="M12 23A11 11 0 1 1 23 12" fill="none" stroke={t} strokeWidth="1.2" /><path d="M20 12h5l-3 4z" fill={t} /><path d="M11 5l7 7-7 7-7-7z" fill={g} /></g>,
  tScale: <g><path d="M2 1h21v21H2z" fill="none" stroke={t} strokeWidth="1.2" strokeDasharray="4 2" /><rect x="1" y="12" width="10" height="10" fill={g} /><path d="M10 9h5v5" stroke={t} fill="none" /></g>,
  lay1: <g><path d="M1 1h22v22H1z" fill={g} /><path d="M3 3h18v18H3z" fill="none" stroke={k} /><Diamond x={12} y={8} w={4} h={2.4} /><Diamond x={12} y={15} w={4} h={2.4} /><Diamond x={8} y={11.5} w={3.6} h={2.4} /><Diamond x={16} y={11.5} w={3.6} h={2.4} /></g>,
  lay4: <g><path d="M1 1h10v10H1zM1 13h10v10H1zM13 13h10v10H13z" fill={k} stroke={g} /><rect x="13" y="1" width="10" height="10" fill={g} /><Diamond x={18} y={6} w={4} h={3} /><path d="M6 3v6M3 6h6M6 15v6M3 18h6M18 15v6M15 18h6" stroke={g} /></g>,
  layOut: <g><path d="M1 1h10v22H1z" fill={k} stroke={g} /><path d="M3 8h6M3 11h6M3 13h6M3 15h6" stroke={g} strokeWidth=".8" /><rect x="13" y="1" width="10" height="22" fill={g} /><Diamond x={18} y={12} w={4} h={3} /></g>,
  layGraph: <g><path d="M1 1h22v10H1z" fill={g} /><Diamond x={12} y={6} w={4} h={2} /><path d="M1 13h22v10H1z" fill={k} stroke={g} /><path d="M3 16h3M3 18h3M3 20h3M11 15v6" stroke={g} /><path d="M8 20q3-6 6-2t7-2" stroke={t} fill="none" /></g>,
  layHyper: <g><path d="M1 1h10v22H1z" fill={k} stroke={g} /><path d="M3 3h2v3H3zM7 3h2v3H7zM3 8h2v3H3zM7 8h2v3H7zM4 15h4v3H4z" stroke={g} fill="none" /><rect x="13" y="1" width="10" height="22" fill={g} /><Diamond x={18} y={12} w={4} h={3} /></g>,
  layMix: <g><path d="M1 1h10v10H1z" fill={g} /><Diamond x={6} y={6} w={4} h={2} /><path d="M13 1h10v10H13zM1 13h22v10H1z" fill={k} stroke={g} /><path d="M15 3h4v2h-4z" stroke={t} fill="none" /><path d="M17 7h4v2h-4z" stroke={g} fill="none" /><path d="M3 16h3M3 18h3M3 20h3M11 15v6" stroke={g} /><path d="M8 20q3-6 6-2t7-2" stroke={t} fill="none" /></g>,
  tiny: <path d="M9 11h6l-3 3z" fill="#ccc" />,

  /* dock */
  axis3: <g><path d="M10 14V6H8l4-6 4 6h-2v8z" fill="#2bb24c" /><path d="M11 12L6 13v-2l-6 5 6 3v-2l6-2z" fill="#2846d8" /><path d="M12 13l6 4 1-3 5 9-9-1 2-2-6-4z" fill="#d83030" /></g>,
  pie: <g opacity=".45"><circle cx="12" cy="12" r="10" fill="none" stroke="#5a7a5a" strokeWidth="2" /><path d="M12 3a9 9 0 0 0 0 18z" fill="#3c6a3c" /></g>,
  redLine: <path d="M2 23L17 8L14 6L23 2L20 11L18 9" stroke="#6b3b3b" fill="#6b3b3b" strokeWidth="1.5" />,
  float: <g fill="none" stroke="#cfd6da" strokeWidth="2"><path d="M9 4h11v10h-4M9 4v4" /><path d="M4 10h10v9H4zM4 11h10" /></g>,
  x: <path d="M4 4l16 16M20 4L4 20" stroke="#cfd6da" strokeWidth="4" />,
  layUp: <g><path d="M0 13l10-7 3 2v11l-3 1z" fill={g} /><path d="M14 21V12h-3l6-7 6 7h-3v9z" fill={t} stroke={C.bg} /></g>,
  layDown: <g><path d="M0 13l10-7 3 2v11l-3 1z" fill={g} /><path d="M14 6v8h-3l6 7 6-7h-3V6z" fill={t} stroke={C.bg} /></g>,
  layAdd: <g><path d="M0 15l11-7 10 7-10 7z" fill={g} /><path d="M16 1h4v4h4v4h-4v4h-4V9h-4V5h4z" fill={t} stroke={C.bg} /></g>,
  layObj: <g><path d="M0 15l11-7 10 7-10 7z" fill={g} /><circle cx="17" cy="7" r="6" fill={t} /></g>,

  /* playback */
  pStart: <path d="M1 2h2v20H1zM4 12l9-8v16zM13 12l9-8v16z" fill={g} />,
  pPrev: <path d="M2 2h3v20H2zM6 12L20 3v18z" fill={g} />,
  pPrevKey: <g><path d="M9 12L20 3v18z" fill={g} /><rect x="3" y="4" width="5" height="16" fill="#e0803c" /><path d="M5.5 0v3M5.5 21v3" stroke={g} /></g>,
  pBack: <path d="M2 12L20 1v22z" fill={g} />,
  pPlay: <path d="M22 12L4 1v22z" fill={g} />,
  pNextKey: <g><path d="M15 12L4 3v18z" fill={g} /><rect x="16" y="4" width="5" height="16" fill="#e0803c" /><path d="M18.5 0v3M18.5 21v3" stroke={g} /></g>,
  pNext: <path d="M22 2h-3v20h3zM18 12L4 3v18z" fill={g} />,
  pEnd: <path d="M23 2h-2v20h2zM20 12l-9-8v16zM11 12L2 4v16z" fill={g} />,
  triDown: <path d="M2 5h20L12 19zM7 8l5 7 5-7z" fill="#9c9c9c" fillRule="evenodd" />,
  autoKey: <g><path d="M3 9A10 10 0 0 1 19 5M21 15A10 10 0 0 1 5 19" stroke={g} strokeWidth="2" fill="none" /><path d="M16 7h6l-1-6zM8 17H2l1 6z" fill={g} /><path d="M5 12h4M15 12h4" stroke={g} strokeWidth="2" /><rect x="11" y="6" width="3" height="12" fill="#e0803c" /></g>,
  runner: <g><circle cx="7" cy="6" r="4.5" fill="none" stroke={g} strokeWidth="2.5" strokeDasharray="3 1" /><circle cx="18" cy="6" r="2.3" fill="#e0803c" /><path d="M8 12l4-3 4 1-3 6 4 2-1 6M12 16l-2 4H5M15 11l3 3h4" stroke="#e0803c" strokeWidth="2.8" fill="none" /></g>,
  script: <g><path d="M2 1h20v4H2zM2 7h20v16H2z" fill={g} /><path d="M4 3h1M6 3h1M8 3h1" stroke={k} strokeWidth="1.5" /><path d="M9 10q-2 0-2 2.5t-2 2.5q2 0 2 2.5t2 2.5M15 10q2 0 2 2.5t2 2.5q-2 0-2 2.5t-2 2.5M12 12v2M12 17v3" stroke={k} strokeWidth="1.5" fill="none" /></g>,
  maya: <g><path d="M0 8L12 0L24 8V24H18L12 20L6 24H0Z" fill="#158a8c" /><path d="M0 8L7 17V24H0Z" fill="#20e8e4" /><path d="M12 0L4 14L12 22L20 14Z" fill="#0f6d70" /><path d="M12 0L8 13l4 5 4-5Z" fill="#19a0a0" /><path d="M6 18l6 3 6-3-2 6-4-3-4 3z" fill="#0f3f42" /><path d="M12 24l-5-7 5 4 5-4z" fill="#2fd6d2" /></g>,
  minimize: <path d="M3 12h18" stroke="#fff" strokeWidth="1.8" />,
  restore: <path d="M3 8h13v13H3zM8 8V3h13v13h-5" stroke="#fff" strokeWidth="1.8" fill="none" />,
  close: <path d="M3 3l18 18M21 3L3 21" stroke="#fff" strokeWidth="1.8" />,
};

const Svg = styled.svg`
  display: block;
  flex: none;
`;
const Icon = ({ name, size }: { name: string; size: number }) => (
  <Svg width={size} height={size} viewBox="0 0 24 24" aria-hidden="true">{ICONS[name]}</Svg>
);

/* ---------- shared parts ---------- */
const Page = styled.div`
  display: flex;
  flex-direction: column;
  min-height: 100vh;
  background: ${C.bg};
`;
/* dotted handle; stretches when it has no width of its own */
const Grip = styled.span<{ $w?: number; $h: number }>`
  flex: ${(p) => (p.$w ? "none" : "1")};
  width: ${(p) => (p.$w ? `${p.$w}px` : "auto")};
  height: ${(p) => p.$h}px;
  background-image: linear-gradient(${C.bg} 2px, transparent 2px), linear-gradient(90deg, #808080 1px, transparent 1px);
  background-size: 4px 3px;
`;
const IconButton = styled.button<{ $w: number; $h: number; $on?: boolean; $off?: boolean }>`
  display: flex;
  flex: none;
  align-items: center;
  justify-content: center;
  width: ${(p) => p.$w}px;
  height: ${(p) => p.$h}px;
  border-radius: 2px;
  background: ${(p) => (p.$on ? C.blue : "transparent")};
  box-shadow: ${(p) => (p.$off ? "inset 0 0 0 1px #2e2e2e" : "none")};
`;
const SepBox = styled.span<{ $w: number }>`
  display: flex;
  flex: none;
  justify-content: center;
  width: ${(p) => p.$w}px;
`;
const MenuButton = styled.button`
  padding: 0 7px;
  white-space: nowrap;
`;
const Field = styled.input<{ $w: number; $h: number }>`
  flex: none;
  width: ${(p) => p.$w}px;
  height: ${(p) => p.$h}px;
  padding: 0 5px;
  background: ${C.dark};
  border-radius: 2px;
`;
const DropBox = styled.span<{ $w: number; $h: number }>`
  display: flex;
  flex: none;
  align-items: center;
  width: ${(p) => p.$w}px;
  height: ${(p) => p.$h}px;
  background: #5d5d5d;
  border-radius: 2px;
  select {
    flex: 1;
    min-width: 0;
    height: 100%;
    padding-left: 3px;
    appearance: none;
    color: #e6e6e6;
    border-right: 1px solid #4a4a4a;
  }
  select + svg { margin: 0 2px; }
`;
const Outlined = styled.button<{ $w: number; $h: number }>`
  flex: none;
  width: ${(p) => p.$w}px;
  height: ${(p) => p.$h}px;
  padding: 0 5px;
  border: 1px solid #525252;
  border-radius: 3px;
  text-align: left;
  white-space: nowrap;
`;

/* ---------- title and menus ---------- */
const TitleBar = styled.header`
  display: flex;
  align-items: center;
  height: 23px;
  padding: 0 15px 0 2px;
  gap: 5px;
  background: #db3c00;
  h1 { flex: 1; margin: 0; font-family: Roboto, "Open Sans", sans-serif; font-size: 12px; font-weight: 400; color: #fff; }
`;
const AppBadge = styled.span`
  padding: 1px 0 0;
  background: #d9efef;
`;
const WindowButtons = styled.div`
  display: flex;
  gap: 26px;
`;
const MenuRow = styled.nav<{ $h: number; $gap: number }>`
  display: flex;
  align-items: center;
  height: ${(p) => p.$h}px;
  padding-left: 2px;
  gap: ${(p) => p.$gap}px;
`;

/* ---------- status line ---------- */
const StatusLine = styled.div`
  display: flex;
  align-items: center;
  height: 25px;
  padding: 0 3px 0 7px;
`;
const Group = styled.div<{ $gap?: number; $ml?: number }>`
  display: flex;
  align-items: center;
  gap: ${(p) => p.$gap ?? 0}px;
  margin-left: ${(p) => p.$ml ?? 0}px;
`;
const Coord = styled.label`
  display: flex;
  align-items: center;
  gap: 3px;
`;
const Fill = styled.span`
  flex: 1;
`;

/* ---------- shelf ---------- */
const Shelf = styled.section`
  display: flex;
  height: 72px;
  padding: 5px 3px 1px 7px;
  border-bottom: 1px solid ${C.line};
`;
const ShelfSide = styled.div`
  display: flex;
  flex-direction: column;
  align-items: center;
  justify-content: space-between;
  width: 20px;
  margin: 0 2px 0 7px;
  padding: 8px 0;
  background: #373737;
`;
const ShelfMain = styled.div`
  display: flex;
  flex: 1;
  flex-direction: column;
  min-width: 0;
`;
const Tabs = styled.div`
  display: flex;
  gap: 1px;
`;
const Tab = styled.button<{ $on?: boolean }>`
  height: 21px;
  padding: 0 12px;
  white-space: nowrap;
  background: ${(p) => (p.$on ? C.tabOn : C.tab)};
  color: ${(p) => (p.$on ? "#f0f0f0" : C.dim)};
  border-radius: 2px 2px 0 0;
`;
const ShelfBody = styled.div`
  display: flex;
  flex: 1;
  align-items: center;
  padding: 0 5px 0 3px;
  border: 1px solid ${C.line};
`;
const ShelfRule = styled.span`
  flex: none;
  width: 2px;
  height: 34px;
  margin: 0 5px;
  background: #9a9a9a;
`;
const Spinner = styled.div`
  display: flex;
  flex-direction: column;
  justify-content: space-between;
  height: 34px;
  background: #373737;
`;

/* ---------- main area ---------- */
const Main = styled.main`
  display: flex;
  flex: 1;
  min-height: 0;
  border-bottom: 1px solid ${C.line};
`;
const Toolbox = styled.aside`
  display: flex;
  flex: none;
  flex-direction: column;
  align-items: center;
  width: 44px;
  padding: 8px 3px 5px 4px;
  border-right: 1px solid ${C.line};
  hr { width: 36px; height: 2px; margin: 41px 0 5px; border: 0; background: #9a9a9a; }
`;
const ToolGroup = styled.div<{ $gap: number }>`
  display: flex;
  flex-direction: column;
  gap: ${(p) => p.$gap}px;
  margin-top: 3px;
`;
const MoreButton = styled.button`
  display: flex;
  align-items: center;
  justify-content: center;
  width: 30px;
  height: 30px;
  margin-top: 6px;
  border: 1px solid #303030;
`;
const Panel = styled.section`
  display: flex;
  flex: 1;
  flex-direction: column;
  min-width: 0;
  margin: 1px;
  border: 1px solid #808080;
`;
const PanelTools = styled.div`
  display: flex;
  align-items: center;
  height: 20px;
`;
const OnBadge = styled.span`
  width: 15px;
  height: 15px;
  border: 1px solid #1f4654;
  border-radius: 50%;
  background: ${C.teal};
  color: #1f4654;
  font-size: 6px;
  font-weight: 700;
  line-height: 13px;
`;
const Viewport = styled.div`
  position: relative;
  flex: 1;
  overflow: hidden;
  background: linear-gradient(#899eb5 0%, #7b8ea3 20%, #687989 45%, #536170 65%, #3f4851 82%, #2f373f 90%, #22262c 94%, #0e0e0e 100%);
`;
const SceneSvg = styled.svg`
  position: absolute;
  inset: 0;
  width: 100%;
  height: 100%;
`;
const CameraName = styled.span`
  position: absolute;
  left: 0;
  right: 0;
  bottom: 5px;
  padding-right: 14px;
  text-align: center;
  color: #fff;
  font-size: 10px;
  font-weight: 700;
`;
const AxisMark = styled.svg`
  position: absolute;
  left: 10px;
  bottom: 14px;
  font: 700 10px "Open Sans", sans-serif;
`;

/* ---------- right dock ---------- */
const Dock = styled.aside`
  display: flex;
  flex: none;
  flex-direction: column;
  width: 435px;
  padding: 3px 1px 3px 6px;
  border-left: 1px solid ${C.line};
`;
const DockTitle = styled.div`
  display: flex;
  align-items: center;
  height: 16px;
  padding: 0 1px 0 3px;
  h2 {
    margin: 0 18px;
    font-family: Roboto, "Open Sans", sans-serif;
    font-size: 10px;
    font-weight: 400;
    color: #b4c0c8;
    white-space: nowrap;
  }
`;
const DockButton = styled.button`
  display: flex;
  align-items: center;
  justify-content: center;
  width: 13px;
  height: 13px;
  margin-left: 2px;
  border: 1px solid #2c2c2c;
  border-radius: 2px;
`;
const DockIcons = styled.div`
  display: flex;
  justify-content: flex-end;
  gap: 5px;
  padding: 4px 5px 2px 0;
`;
const ChannelList = styled.div`
  flex: 1;
  margin: 0 2px 2px;
  background: ${C.dark};
`;
const LayerEditor = styled.div`
  border-top: 1px solid ${C.line};
  padding-top: 9px;
`;
const LayerBody = styled.div`
  display: flex;
  flex-direction: column;
  margin-right: 1px;
  padding: 1px 4px 3px 3px;
  border: 1px solid ${C.line};
`;
const LayerIcons = styled.div`
  display: flex;
  justify-content: flex-end;
  gap: 8px;
  padding: 2px 5px 9px 0;
`;
const LayerList = styled.ul`
  height: 138px;
  margin: 0;
  padding: 4px;
  list-style: none;
  background: ${C.dark};
  li { display: flex; align-items: center; gap: 3px; color: #fff; }
`;
const Flag = styled.button`
  width: 20px;
  height: 14px;
  border: 1px solid #1d1d1d;
  border-radius: 2px;
  line-height: 12px;
  color: #fff;
`;
const Swatch = styled.span`
  width: 16px;
  height: 14px;
  background: #000;
`;
const SideTabs = styled.div`
  display: flex;
  flex: none;
  flex-direction: column;
  gap: 1px;
  width: 21px;
`;
const SideTab = styled.button<{ $on?: boolean }>`
  width: 21px;
  padding: 12px 0 10px;
  writing-mode: vertical-rl;
  white-space: nowrap;
  color: ${(p) => (p.$on ? "#e6e6e6" : C.dim)};
  background: ${(p) => (p.$on ? C.tabOn : C.tab)};
`;

/* ---------- bottom rows ---------- */
const BottomRow = styled.div<{ $h: number }>`
  display: flex;
  flex: none;
  align-items: center;
  height: ${(p) => p.$h}px;
  padding: 0 10px 0 7px;
`;
const Timeline = styled.div`
  display: grid;
  flex: 1;
  grid-template-columns: 4fr repeat(23, 5fr) 20px;
  height: 28px;
  margin-left: 5px;
  padding-left: 8px;
  background: ${C.dark};
`;
const CurrentFrame = styled.span`
  display: flex;
  align-items: flex-end;
  width: 12px;
  padding-left: 2px;
  background: #565656;
  color: #fff;
`;
const Tick = styled.span`
  display: flex;
  flex-direction: column;
  justify-content: space-between;
  min-width: 0;
  color: #7a7a7a;
  line-height: 9px;
  &::after { content: ""; width: 2px; height: 15px; background: #868686; }
  b { font-weight: 400; padding-left: 2px; }
`;
const RangeTrack = styled.div`
  display: flex;
  flex: 1;
  height: 23px;
  margin: 0 7px;
  padding: 2px 0 2px 7px;
  background: #383838;
`;
const RangeBar = styled.div`
  display: flex;
  flex: 121;
  align-items: center;
  gap: 4px;
  height: 19px;
  padding: 0 4px;
  border-radius: 3px;
  background: #5d5d5d;
`;
const RangeRest = styled.span`
  flex: 80;
`;
const Handle = styled.button`
  width: 13px;
  height: 13px;
  border-radius: 3px;
  background: #909090;
`;
const CommandInput = styled.input`
  flex: 1;
  min-width: 0;
  height: 23px;
  margin-left: 14px;
  padding: 0 6px;
  border-radius: 2px;
  background: ${C.dark};
`;
const CommandOutput = styled.output`
  flex: 2;
  height: 25px;
  margin: 0 4px 0 7px;
  background: ${C.dark};
`;
const HelpLine = styled.footer`
  display: flex;
  flex: none;
  align-items: center;
  height: 25px;
  padding-left: 7px;
  gap: 17px;
  border-top: 1px solid ${C.line};
  font-family: Roboto, "Open Sans", sans-serif;
  font-size: 10px;
  color: #b4c0c8;
`;

const MENUS = ["File", "Edit", "Create", "Select", "Modify", "Display", "Windows", "Mesh", "Edit Mesh", "Mesh Tools", "Mesh Display", "Curves", "Surfaces", "Deform", "UV", "Generate", "Cache", "- 3DtoAll -", "Arnold", "Redshift", "Help"];
const SHELVES = ["Curves / Surfaces", "Polygons", "Sculpting", "Rigging", "Animation", "Rendering", "FX", "FX Caching", "Custom", "XGen", "Arnold"];
const SHELF_ICONS = ["sphere", "cube", "cylinder", "cone", "plane", "torus", "pyramid", "pipe", "|", "combine", "separate", "mirror", "smooth", "cage", "reduce", "cutTool", "extrude", "bridge", "bevel", "edge", "vert", "quad", "target", "blocks", "|", "uvPlane", "uvCyl", "uvSph", "uvAuto", "uvCont", "uvEdit", "uvSnap"];
const STATUS_ICONS = ["sep", "file", "open", "save", "undo", "redo", "collapse", "sep", "selHier", "selObj", "selComp", "collapse", "sep", "snapGrid", "snapCurve", "snapPoint", "snapProj", "snapPlane", "snapLive"];
const RENDER_ICONS = ["collapse", "sep", "clapEye", "clap", "clapIpr", "clapGear", "render", "sep"];
const PANEL_ICONS = ["sep", "cam", "camGear", "mark", "imgPlane", "pan2d", "pencil", "sep", "gridP", "film", "gate", "gateOff", "cross", "safeA", "safeT", "sep", "wire", "shaded", "half", "wireShade", "tex", "light", "shadow", "sep", "ao", "blur", "aa", "dofOff", "sep", "marquee", "sep", "iso", "isoT", "isoD", "sep"];
const TOOLS = ["tSelect", "tLasso", "tPaint", "tMove", "tRotate", "tScale"];
const LAYOUTS = ["lay1", "lay4", "layOut", "layGraph", "layHyper", "layMix"];
const PLAYBACK = ["pStart", "pPrev", "pPrevKey", "pBack", "pPlay", "pNextKey", "pNext", "pEnd"];
const TICKS = Array.from({ length: 24 }, (_, i) => (i + 1) * 5);

const ToolStrip = ({ names, w, h, sepW, icon, on = [], off = [] }: { names: string[]; w: number; h: number; sepW: number; icon: number; on?: string[]; off?: string[] }) => (
  <>
    {names.map((n, i) =>
      n === "sep" || n === "collapse" ? (
        <SepBox key={i} $w={sepW}><Icon name={n} size={h - 2} /></SepBox>
      ) : (
        <IconButton key={i} $w={w} $h={h} $on={on.includes(n)} $off={off.includes(n)} aria-label={n}><Icon name={n} size={icon} /></IconButton>
      ),
    )}
  </>
);

export default function App() {
  return (
    <Page>
      <Global />
      <TitleBar>
        <AppBadge><Icon name="maya" size={15} /></AppBadge>
        <h1>Autodesk Maya 2016: untitled*</h1>
        <WindowButtons>
          {["minimize", "restore", "close"].map((n) => (
            <IconButton key={n} $w={20} $h={20} aria-label={n}><Icon name={n} size={13} /></IconButton>
          ))}
        </WindowButtons>
      </TitleBar>

      <MenuRow $h={20} $gap={1}>
        {MENUS.map((m) => <MenuButton key={m}>{m}</MenuButton>)}
      </MenuRow>

      <StatusLine>
        <Grip $w={5} $h={20} />
        <Group $ml={6}>
          <DropBox $w={98} $h={20}>
            <select aria-label="Menu set"><option>Modeling</option></select>
            <Icon name="down" size={15} />
          </DropBox>
          <ToolStrip names={STATUS_ICONS} w={23} h={22} sepW={22} icon={19} on={["selObj"]} />
        </Group>
        <Group $ml={2}>
          <Outlined $w={98} $h={20}>No Live Surface</Outlined>
          <ToolStrip names={RENDER_ICONS} w={23} h={22} sepW={22} icon={19} />
        </Group>
        <Group $ml={7} $gap={2}>
          <IconButton $w={23} $h={22} aria-label="Input mode"><Icon name="layoutPan" size={20} /></IconButton>
          <Group $ml={3} $gap={2}>
            {["X:", "Y:", "Z:"].map((a) => (
              <Coord key={a}>{a}<Field $w={38} $h={20} /></Coord>
            ))}
          </Group>
        </Group>
        <Fill />
        <Group $gap={1}>
          <ToolStrip names={["uiModel", "uiAttr", "uiTool", "uiLayers"]} w={22} h={22} sepW={0} icon={20} on={["uiAttr", "uiLayers"]} />
        </Group>
      </StatusLine>

      <Shelf>
        <Grip $w={5} $h={64} />
        <ShelfSide>
          <Icon name="burger" size={13} />
          <Icon name="gear" size={14} />
        </ShelfSide>
        <ShelfMain>
          <Tabs>
            {SHELVES.map((s) => <Tab key={s} $on={s === "Polygons"}>{s}</Tab>)}
          </Tabs>
          <ShelfBody>
            {SHELF_ICONS.map((n, i) =>
              n === "|" ? <ShelfRule key={i} /> : (
                <IconButton key={i} $w={35} $h={32} aria-label={n}><Icon name={n} size={26} /></IconButton>
              ),
            )}
            <Fill />
            <Spinner>
              {["spinUp", "spinDot", "spinDown"].map((n) => (
                <IconButton key={n} $w={12} $h={11} aria-label={n}><Icon name={n} size={11} /></IconButton>
              ))}
            </Spinner>
          </ShelfBody>
        </ShelfMain>
      </Shelf>

      <Main>
        <Toolbox>
          <Grip $w={34} $h={6} />
          <ToolGroup $gap={1}>
            {TOOLS.map((n) => (
              <IconButton key={n} $w={36} $h={36} $on={n === "tSelect"} aria-label={n}><Icon name={n} size={27} /></IconButton>
            ))}
          </ToolGroup>
          <hr />
          <ToolGroup $gap={7}>
            {LAYOUTS.map((n) => (
              <IconButton key={n} $w={30} $h={30} aria-label={n}><Icon name={n} size={30} /></IconButton>
            ))}
          </ToolGroup>
          <MoreButton aria-label="More layouts"><Icon name="tiny" size={22} /></MoreButton>
          <Fill />
          <Icon name="maya" size={32} />
        </Toolbox>

        <Panel>
          <MenuRow $h={19} $gap={2}>
            {["View", "Shading", "Lighting", "Show", "Renderer", "Panels"].map((m) => <MenuButton key={m}>{m}</MenuButton>)}
          </MenuRow>
          <PanelTools>
            <ToolStrip names={PANEL_ICONS} w={20} h={19} sepW={11} icon={15} on={["gridP", "wire"]} off={["gateOff", "dofOff"]} />
            <Group $gap={2}>
              <IconButton $w={20} $h={19} aria-label="Exposure"><Icon name="aperture" size={14} /></IconButton>
              <Field $w={38} $h={15} aria-label="Exposure value" defaultValue="0.00" />
              <IconButton $w={20} $h={19} aria-label="Gamma"><Icon name="contrast" size={14} /></IconButton>
              <Field $w={38} $h={15} aria-label="Gamma value" defaultValue="1.00" />
              <IconButton $w={20} $h={19} $on aria-label="Color management"><OnBadge>ON</OnBadge></IconButton>
              <DropBox $w={139} $h={17}>
                <select aria-label="View transform"><option>sRGB gamma</option></select>
                <Icon name="down" size={15} />
              </DropBox>
            </Group>
          </PanelTools>
          <Viewport>
            <Scene />
            <AxisMark width="36" height="40" viewBox="0 0 36 40" aria-hidden="true">
              <path d="M15 15v12" stroke="#00e000" />
              <path d="M15 28l6 3" stroke="#e00000" />
              <path d="M15 28l-7 3" stroke="#0000e0" />
              <text x="12" y="12" fill="#00e000">y</text>
              <text x="22" y="32" fill="#e00000">x</text>
              <text x="3" y="32" fill="#0000e0">z</text>
            </AxisMark>
            <CameraName>persp</CameraName>
          </Viewport>
        </Panel>

        <Dock>
          <DockTitle>
            <Grip $h={6} />
            <h2>Channel Box / Layer Editor</h2>
            <Grip $h={6} />
            <DockButton aria-label="Float"><Icon name="float" size={10} /></DockButton>
            <DockButton aria-label="Close"><Icon name="x" size={9} /></DockButton>
          </DockTitle>
          <DockIcons>
            {["axis3", "pie", "redLine"].map((n) => <Icon key={n} name={n} size={15} />)}
          </DockIcons>
          <MenuRow $h={23} $gap={2}>
            {["Channels", "Edit", "Object", "Show"].map((m) => <MenuButton key={m}>{m}</MenuButton>)}
          </MenuRow>
          <ChannelList />
          <LayerEditor>
            <Tabs>
              {["Display", "Render", "Anim"].map((s) => <Tab key={s} $on={s === "Display"}>{s}</Tab>)}
            </Tabs>
            <LayerBody>
              <MenuRow $h={20} $gap={1}>
                {["Layers", "Options", "Help"].map((m) => <MenuButton key={m}>{m}</MenuButton>)}
              </MenuRow>
              <LayerIcons>
                {["layUp", "layDown", "layAdd", "layObj"].map((n) => (
                  <IconButton key={n} $w={16} $h={14} aria-label={n}><Icon name={n} size={15} /></IconButton>
                ))}
              </LayerIcons>
              <LayerList>
                <li>
                  <Flag>V</Flag>
                  <Flag>P</Flag>
                  <Flag aria-label="Display type" />
                  <Swatch />
                  <span>...:BOMAG_Soil_Roller_Barrel</span>
                </li>
              </LayerList>
            </LayerBody>
          </LayerEditor>
        </Dock>
        <SideTabs>
          <SideTab $on>Channel Box / Layer Editor</SideTab>
          <SideTab>Attribute Editor</SideTab>
        </SideTabs>
      </Main>

      <BottomRow $h={34}>
        <Grip $w={5} $h={26} />
        <Timeline>
          <CurrentFrame>1</CurrentFrame>
          {TICKS.map((n) => <Tick key={n}><b>{n}</b></Tick>)}
        </Timeline>
        <Group $ml={7} $gap={6}>
          <Field $w={68} $h={18} aria-label="Current frame" defaultValue="1" />
          <Group>
            {PLAYBACK.map((n) => (
              <IconButton key={n} $w={23} $h={22} aria-label={n}><Icon name={n} size={16} /></IconButton>
            ))}
          </Group>
        </Group>
      </BottomRow>

      <BottomRow $h={34}>
        <Grip $w={5} $h={22} />
        <Group $ml={6} $gap={8}>
          <Field $w={68} $h={23} aria-label="Animation start" defaultValue="1" />
          <Field $w={68} $h={23} aria-label="Playback start" defaultValue="1" />
        </Group>
        <RangeTrack>
          <RangeBar>
            <Handle aria-label="Range start" />
            1
            <Fill />
            120
            <Handle aria-label="Range end" />
          </RangeBar>
          <RangeRest />
        </RangeTrack>
        <Group $gap={8}>
          <Field $w={68} $h={23} aria-label="Playback end" defaultValue="120" />
          <Field $w={68} $h={23} aria-label="Animation end" defaultValue="200" />
        </Group>
        <IconButton $w={21} $h={22} aria-label="Anim layer menu"><Icon name="triDown" size={9} /></IconButton>
        <Outlined $w={102} $h={24}>No Anim Layer</Outlined>
        <IconButton $w={27} $h={22} aria-label="Character set menu"><Icon name="triDown" size={9} /></IconButton>
        <Outlined $w={102} $h={24}>No Character Set</Outlined>
        <Group $ml={7} $gap={10}>
          <IconButton $w={20} $h={22} aria-label="Auto key"><Icon name="autoKey" size={18} /></IconButton>
          <IconButton $w={20} $h={22} aria-label="Preferences"><Icon name="runner" size={20} /></IconButton>
        </Group>
      </BottomRow>

      <BottomRow $h={32}>
        <Grip $w={5} $h={22} />
        <Group $ml={16}><label htmlFor="mel">MEL</label></Group>
        <CommandInput id="mel" />
        <CommandOutput />
        <IconButton $w={20} $h={22} aria-label="Script editor"><Icon name="script" size={20} /></IconButton>
      </BottomRow>

      <HelpLine>
        <Grip $w={5} $h={14} />
        <span>Select Tool: select an object</span>
      </HelpLine>
    </Page>
  );
}
